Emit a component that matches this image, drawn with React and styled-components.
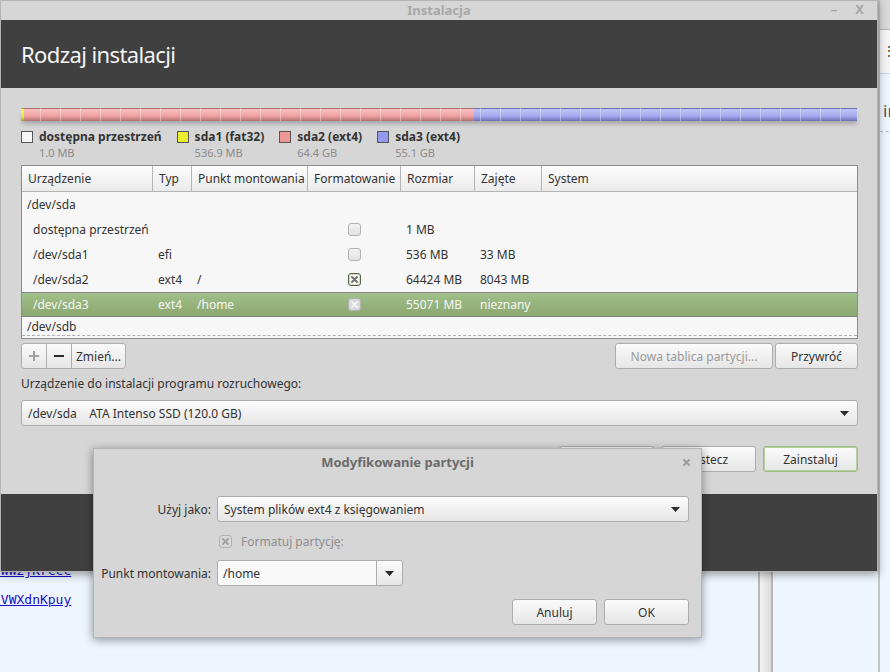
import React from "react";
import styled, { createGlobalStyle } from "styled-components";

const Global = createGlobalStyle`
  body {
    margin: 0;
    font-family: "Noto Sans", "Open Sans", sans-serif;
  }
`;

const Desktop = styled.div`
  position: relative;
  width: 890px;
  height: 672px;
  overflow: hidden;
  background: #eef5fe;
  font-family: "Noto Sans", "Open Sans", sans-serif;
  font-size: 12px;
  color: #333;
`;

/* windows behind the installer */
const BackLinks = styled.div`
  position: absolute;
  left: -7px;
  top: 563px;
  display: flex;
  flex-direction: column;
  gap: 14px;
  font-family: "DejaVu Sans Mono", monospace;
  font-size: 13px;
  a {
    color: #1a0dcc;
    text-decoration: underline;
  }
`;

const BackScroll = styled.div`
  position: absolute;
  left: 758px;
  top: 560px;
  width: 11px;
  height: 120px;
  border-left: 2px solid #b8b8b8;
  border-right: 2px solid #b8b8b8;
  background: linear-gradient(90deg, #f2f2f2, #dcdcdc);
`;

const SideWindow = styled.div`
  position: absolute;
  left: 878px;
  top: 0;
  width: 20px;
  height: 672px;
  border-left: 2px solid #c4c4c4;
  background: #eef5fe;
  display: flex;
  flex-direction: column;

  .bar {
    height: 29px;
    background: #d9d9d9;
    border-bottom: 1px solid #b0b0b0;
  }
  .tools {
    height: 43px;
    background: #f5f5f5;
    border-bottom: 1px solid #c8d8ea;
    font-size: 14px;
    line-height: 41px;
    padding-left: 2px;
    color: #444;
  }
  .txt {
    padding: 25px 0 0 3px;
    font-size: 17px;
    color: #555;
  }
  .dash {
    margin-top: 9px;
    border-top: 1px dashed #b8b8b8;
  }
`;

/* installer windows */
const Window = styled.div`
  position: absolute;
  left: ${(p) => p.$x}px;
  top: ${(p) => p.$y}px;
  width: ${(p) => p.$w}px;
  height: ${(p) => p.$h}px;
  box-sizing: border-box;
  display: flex;
  flex-direction: column;
  background: #d6d6d6;
  border: 1px solid #b4b4b4;
  box-shadow: 0 2px 9px rgba(0, 0, 0, 0.4);
`;

const TitleBar = styled.div`
  position: relative;
  height: ${(p) => p.$h}px;
  box-sizing: border-box;
  padding-bottom: ${(p) => p.$lift || 0}px;
  flex: none;
  display: flex;
  align-items: center;
  justify-content: center;
  font-weight: bold;
  font-size: 13px;
  color: ${(p) => p.$color};
`;

const WinControls = styled.div`
  position: absolute;
  right: ${(p) => p.$right}px;
  top: 0;
  bottom: ${(p) => p.$lift || 0}px;
  display: flex;
  align-items: center;
  gap: 18px;
  color: #a6a6a6;
  font-weight: bold;
  font-size: 13px;
`;

const Header = styled.div`
  height: 68px;
  flex: none;
  background: #404040;
  display: flex;
  align-items: center;
  padding-left: 20px;
  font-size: 22px;
  letter-spacing: -0.6px;
  color: #f4f4f4;
`;

const Body = styled.div`
  height: 406px;
  flex: none;
  box-sizing: border-box;
  padding: 20px 19px 0 20px;
  display: flex;
  flex-direction: column;
`;

const Footer = styled.div`
  flex: 1;
  background: #404040;
`;

const DiskBar = styled.div`
  position: relative;
  height: 13px;
  display: flex;
  box-shadow: 0 4px 4px -1px rgba(0, 0, 0, 0.22);
  &::after {
    content: "";
    position: absolute;
    inset: 0;
    background: repeating-linear-gradient(
      90deg,
      transparent 0 19px,
      rgba(255, 255, 255, 0.35) 19px 20px
    );
    pointer-events: none;
  }
`;

const Segment = styled.div`
  height: 100%;
  box-sizing: border-box;
  background: linear-gradient(${(p) => p.$light}, ${(p) => p.$color} 60%, ${(p) => p.$dark});
  border-top: 1px solid ${(p) => p.$dark};
`;

const Legend = styled.div`
  display: flex;
  gap: 15px;
  margin-top: 8px;
`;

const LegendItem = styled.div`
  display: grid;
  grid-template-columns: 12px auto;
  column-gap: 6px;
  align-items: center;
  b {
    font-size: 12px;
    line-height: 16px;
    color: #333;
  }
  small {
    grid-column: 2;
    font-size: 11px;
    line-height: 15px;
    color: #8a8a8a;
  }
`;

const Swatch = styled.span`
  width: 12px;
  height: 12px;
  box-sizing: border-box;
  border: 1px solid #555;
  background: ${(p) => p.$color};
`;

const Table = styled.div`
  margin-top: 5px;
  height: 174px;
  box-sizing: border-box;
  border: 1px solid #8c8c8c;
  background: #f7f7f7;
  display: flex;
  flex-direction: column;
  overflow: hidden;
`;

const cols = "131px 39px 116px 93px 74px 67px 1fr";

const HeadRow = styled.div`
  display: grid;
  grid-template-columns: ${cols};
  height: 25px;
  flex: none;
  background: linear-gradient(#fdfdfd, #ebebeb);
  border-bottom: 1px solid #b4b4b4;
  > span {
    display: flex;
    align-items: center;
    padding-left: 6px;
    border-right: 1px solid #b4b4b4;
    font-size: 12px;
    color: #333;
  }
  > span:last-child {
    border-right: none;
  }
`;

const Row = styled.div`
  display: grid;
  grid-template-columns: ${cols};
  height: ${(p) => (p.$short ? 19 : 25)}px;
  flex: none;
  box-sizing: border-box;
  color: ${(p) => (p.$selected ? "#f6f6f6" : "#333")};
  background: ${(p) =>
    p.$selected ? "linear-gradient(#a1bf89, #8aa86f)" : "transparent"};
  border-top: ${(p) => (p.$selected ? "1px solid #858585" : "none")};
  border-bottom: ${(p) =>
    p.$selected ? "1px solid #858585" : p.$short ? "1px dashed #b0b0b0" : "none"};
  > span {
    display: flex;
    align-items: ${(p) => (p.$short ? "flex-end" : "center")};
    padding-left: 5px;
    white-space: nowrap;
  }
  > span:first-child {
    padding-left: ${(p) => (p.$child ? 11 : 5)}px;
  }
  > span.check {
    justify-content: center;
    padding-left: 0;
  }
`;

const Check = styled.div`
  width: 13px;
  height: 13px;
  box-sizing: border-box;
  border-radius: 3px;
  display: flex;
  align-items: center;
  justify-content: center;
  border: 1px solid ${(p) => (p.$on && !p.$muted ? "#54683e" : "#b2b2b2")};
  background: ${(p) =>
    p.$muted ? "#d8d8d8" : p.$on ? "#fafafa" : "linear-gradient(#f2f2f2, #e2e2e2)"};
  box-shadow: ${(p) => (p.$on && !p.$muted ? "inset 0 0 0 1px #d4d4d4" : "none")};
  svg {
    display: block;
  }
`;

const ButtonRow = styled.div`
  display: flex;
  align-items: center;
  margin-top: ${(p) => p.$mt}px;
  gap: ${(p) => p.$gap || 0}px;
  justify-content: ${(p) => (p.$end ? "flex-end" : "space-between")};
`;

const Group = styled.div`
  display: flex;
  gap: ${(p) => p.$gap || 0}px;
`;

const Button = styled.button`
  height: 26px;
  min-width: ${(p) => p.$w || 0}px;
  box-sizing: border-box;
  padding: 0 ${(p) => p.$pad ?? 8}px;
  border: 1px solid ${(p) => (p.$accent ? "#9dbb84" : "#adadad")};
  border-radius: 3px;
  background: linear-gradient(#fbfbfb, #e5e5e5);
  font-family: inherit;
  font-size: 12px;
  color: ${(p) => (p.$disabled ? "#9a9a9a" : "#333")};
  box-shadow: ${(p) => (p.$accent ? "inset 0 0 0 1px #b6cfa0" : "none")};
  display: flex;
  align-items: center;
  justify-content: center;
`;

const SegButton = styled(Button)`
  border-radius: 0;
  margin-left: -1px;
  &:first-child {
    margin-left: 0;
    border-radius: 3px 0 0 3px;
  }
  &:last-child {
    border-radius: 0 3px 3px 0;
  }
`;

const Label = styled.div`
  margin-top: 7px;
  font-size: 12px;
  line-height: 16px;
  color: #333;
`;

const Combo = styled.div`
  height: 26px;
  box-sizing: border-box;
  margin-top: ${(p) => p.$mt || 0}px;
  width: ${(p) => (p.$w ? `${p.$w}px` : "auto")};
  border: 1px solid #adadad;
  border-radius: 3px;
  background: linear-gradient(#fbfbfb, #e6e6e6);
  display: flex;
  align-items: center;
  padding-left: 6px;
  font-size: 12px;
  color: #333;
  .text {
    flex: 1;
    white-space: pre;
  }
  .arrow {
    width: 25px;
    align-self: stretch;
    display: flex;
    align-items: center;
    justify-content: center;
  }
  .entry {
    flex: 1;
    align-self: stretch;
    display: flex;
    align-items: center;
    margin-left: -6px;
    padding-left: 5px;
    background: #f8f8f8;
    border-radius: 3px 0 0 3px;
    border-right: 1px solid #adadad;
  }
`;

const Arrow = () => (
  <svg width="9" height="5" viewBox="0 0 9 5">
    <path d="M0 0h9L4.5 5z" fill="#2a2a2a" />
  </svg>
);

const XMark = ({ color, size = 7, weight = 1.8 }) => (
  <svg width={size} height={size} viewBox="0 0 7 7">
    <path d="M1 1l5 5M6 1L1 6" stroke={color} strokeWidth={weight} strokeLinecap="round" />
  </svg>
);

/* dialog */
const DialogBody = styled.div`
  padding: 21px 12px 0 6px;
  display: flex;
  flex-direction: column;
`;

const Form = styled.div`
  display: grid;
  grid-template-columns: 111px 1fr;
  column-gap: 6px;
  row-gap: ${(p) => p.$gap}px;
  align-items: center;
  label {
    text-align: right;
    white-space: nowrap;
    font-size: 12px;
    color: #333;
  }
`;

const CheckLine = styled.div`
  grid-column: 2;
  display: flex;
  align-items: center;
  gap: 9px;
  padding-left: 2px;
  height: 16px;
  color: #8e8e8e;
  font-size: 12px;
`;

const partitions = [
  { color: "#e8e84a", light: "#f4f470", dark: "#a8a820", w: 3 },
  { color: "#efa0a0", light: "#f7c0c0", dark: "#b07070", w: 450 },
  { color: "#a3a9ec", light: "#c0c4f6", dark: "#6a70b0", w: 383 },
];

const legend = [
  { name: "dostępna przestrzeń", size: "1.0 MB", color: "#f6f6f6" },
  { name: "sda1 (fat32)", size: "536.9 MB", color: "#eded30" },
  { name: "sda2 (ext4)", size: "64.4 GB", color: "#ef9696" },
  { name: "sda3 (ext4)", size: "55.1 GB", color: "#9299ee" },
];

const rows = [
  { dev: "/dev/sda" },
  { dev: "dostępna przestrzeń", child: true, check: "off", size: "1 MB" },
  { dev: "/dev/sda1", child: true, type: "efi", check: "off", size: "536 MB", used: "33 MB" },
  { dev: "/dev/sda2", child: true, type: "ext4", mount: "/", check: "on", size: "64424 MB", used: "8043 MB" },
  { dev: "/dev/sda3", child: true, type: "ext4", mount: "/home", check: "on", size: "55071 MB", used: "nieznany", selected: true },
];

export default function App() {
  return (
    <Desktop>
      <Global />
      <BackLinks>
        <a>xWW2jKrccc</a>
        <a>\VWXdnKpuy</a>
      </BackLinks>
      <BackScroll />
      <SideWindow>
        <div className="bar" />
        <div className="tools">⋮</div>
        <div className="txt">ir</div>
        <div className="dash" />
      </SideWindow>

      <Window $x={0} $y={0} $w={878} $h={572}>
        <TitleBar $h={19} $lift={2} $color="#a8a8a8">
          Instalacja
          <WinControls $right={13} $lift={3}>
            <span>–</span>
            <span>X</span>
          </WinControls>
        </TitleBar>
        <Header>Rodzaj instalacji</Header>
        <Body>
          <DiskBar>
            {partitions.map((p, i) => (
              <Segment key={i} $color={p.color} $light={p.light} $dark={p.dark} style={{ width: p.w }} />
            ))}
          </DiskBar>

          <Legend>
            {legend.map((l) => (
              <LegendItem key={l.name}>
                <Swatch $color={l.color} />
                <b>{l.name}</b>
                <small>{l.size}</small>
              </LegendItem>
            ))}
          </Legend>

          <Table>
            <HeadRow>
              <span>Urządzenie</span>
              <span>Typ</span>
              <span>Punkt montowania</span>
              <span>Formatowanie</span>
              <span>Rozmiar</span>
              <span>Zajęte</span>
              <span>System</span>
            </HeadRow>
            {rows.map((r) => (
              <Row key={r.dev} $child={r.child} $selected={r.selected}>
                <span>{r.dev}</span>
                <span>{r.type}</span>
                <span>{r.mount}</span>
                <span className="check">
                  {r.check && (
                    <Check $on={r.check === "on"} $muted={r.selected}>
                      {r.check === "on" && (
                        <XMark color={r.selected ? "#f4f4f4" : "#707070"} size={7} weight={2} />
                      )}
                    </Check>
                  )}
                </span>
                <span>{r.size}</span>
                <span>{r.used}</span>
                <span />
              </Row>
            ))}
            <Row $short>
              <span>/dev/sdb</span>
              <span />
              <span />
              <span />
              <span />
              <span />
              <span />
            </Row>
          </Table>

          <ButtonRow $mt={4}>
            <Group>
              <SegButton $w={26} $pad={0} $disabled>
                <svg width="10" height="10" viewBox="0 0 10 10">
                  <path d="M5 0v10M0 5h10" stroke="#a0a0a0" strokeWidth="2" />
                </svg>
              </SegButton>
              <SegButton $w={26} $pad={0}>
                <svg width="10" height="10" viewBox="0 0 10 10">
                  <path d="M0 5h10" stroke="#2a2a2a" strokeWidth="2" />
                </svg>
              </SegButton>
              <SegButton $pad={4}>Zmień...</SegButton>
            </Group>
            <Group $gap={2}>
              <Button $w={158} $disabled>Nowa tablica partycji...</Button>
              <Button $w={83}>Przywróć</Button>
            </Group>
          </ButtonRow>

          <Label>Urządzenie do instalacji programu rozruchowego:</Label>
          <Combo $mt={8}>
            <span className="text">/dev/sda    ATA Intenso SSD (120.0 GB)</span>
            <span className="arrow">
              <Arrow />
            </span>
          </Combo>

          <ButtonRow $mt={20} $end $gap={7}>
            <Button $w={95}>Zakończ</Button>
            <Button $w={95}>Wstecz</Button>
            <Button $w={95} $accent>
              Zainstaluj
            </Button>
          </ButtonRow>
        </Body>
        <Footer />
      </Window>

      <Window $x={93} $y={448} $w={609} $h={190}>
        <TitleBar $h={26} $color="#6b6b6b">
          Modyfikowanie partycji
          <WinControls $right={11}>
            <XMark color="#9a9a9a" />
          </WinControls>
        </TitleBar>
        <DialogBody>
          <Form $gap={11}>
            <label>Użyj jako:</label>
            <Combo>
              <span className="text">System plików ext4 z księgowaniem</span>
              <span className="arrow">
                <Arrow />
              </span>
            </Combo>
            <CheckLine>
              <Check $on $muted>
                <XMark color="#a0a0a0" />
              </Check>
              Formatuj partycję:
            </CheckLine>
            <label>Punkt montowania:</label>
            <Combo $w={186}>
              <span className="entry">/home</span>
              <span className="arrow">
                <Arrow />
              </span>
            </Combo>
          </Form>
          <ButtonRow $mt={13} $end $gap={7}>
            <Button $w={85}>Anuluj</Button>
            <Button $w={85}>OK</Button>
          </ButtonRow>
        </DialogBody>
      </Window>
    </Desktop>
  );
}
